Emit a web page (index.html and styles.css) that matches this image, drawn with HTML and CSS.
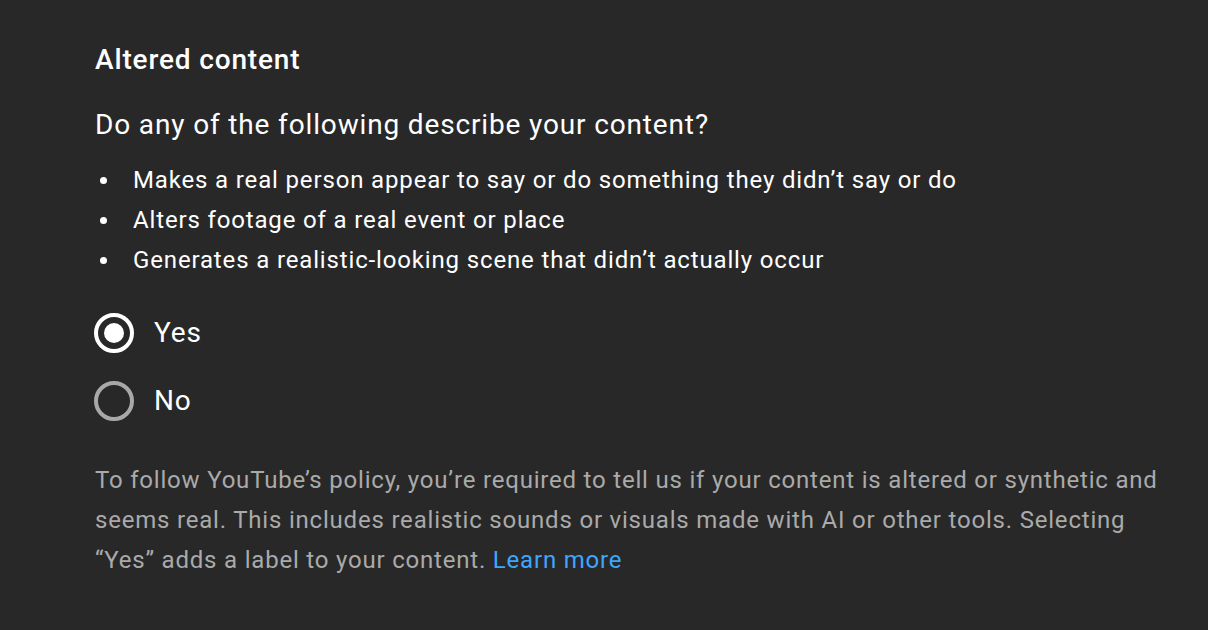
FILE: index.html
```html
<!DOCTYPE html>
<html>
<head>
<meta charset="utf-8">
<link rel="stylesheet" href="styles.css">
</head>
<body>
<main class="section">
  <h2 class="title">Altered content</h2>
  <p class="question">Do any of the following describe your content?</p>
  <ul class="bullets">
    <li>Makes a real person appear to say or do something they didn’t say or do</li>
    <li>Alters footage of a real event or place</li>
    <li>Generates a realistic-looking scene that didn’t actually occur</li>
  </ul>
  <div class="radios">
    <label class="radio checked"><span class="circle"><span class="dot"></span></span><span class="label">Yes</span></label>
    <label class="radio"><span class="circle"></span><span class="label">No</span></label>
  </div>
  <p class="note">To follow YouTube’s policy, you’re required to tell us if your content is altered or synthetic and seems real. This includes realistic sounds or visuals made with AI or other tools. Selecting “Yes” adds a label to your content. <a class="link" href="#">Learn more</a></p>
</main>
</body>
</html>
```
FILE: styles.css
```css
html, body {
  margin: 0;
  padding: 0;
  background: #282828;
  width: 1208px;
  height: 630px;
  overflow: hidden;
}
body {
  font-family: Roboto, "Liberation Sans", sans-serif;
  color: #ffffff;
  letter-spacing: 0.85px;
}
.section {
  padding: 40px 0 0 95px;
  display: flex;
  flex-direction: column;
}
.title {
  margin: 0;
  font-size: 28px;
  font-weight: 500;
  line-height: 40px;
}
.question {
  margin: 25px 0 0;
  font-size: 28px;
  font-weight: 400;
  line-height: 40px;
}
.bullets {
  margin: 15px 0 0;
  padding: 0;
  list-style: none;
  font-size: 24px;
  line-height: 40px;
}
.bullets li {
  display: flex;
  align-items: center;
}
.bullets li::before {
  content: "";
  flex: none;
  width: 7px;
  height: 7px;
  border-radius: 50%;
  background: #ffffff;
  margin: 0 26px 0 5px;
}
.radios {
  margin-top: 33px;
  display: flex;
  flex-direction: column;
  gap: 28px;
}
.radio {
  display: flex;
  align-items: center;
  gap: 20px;
  height: 40px;
  margin-left: -1px;
}
.circle {
  box-sizing: border-box;
  width: 40px;
  height: 40px;
  border-radius: 50%;
  border: 4px solid #a8a8a8;
  display: flex;
  align-items: center;
  justify-content: center;
}
.checked .circle {
  border-color: #ffffff;
}
.dot {
  width: 20px;
  height: 20px;
  border-radius: 50%;
  background: #ffffff;
}
.label {
  font-size: 28px;
  line-height: 40px;
}
.note {
  margin: 39px 0 0;
  width: 1080px;
  font-size: 24px;
  line-height: 40px;
  color: #aaaaaa;
  letter-spacing: 0.8px;
}
.link {
  color: #3ea6ff;
  text-decoration: none;
}
```
